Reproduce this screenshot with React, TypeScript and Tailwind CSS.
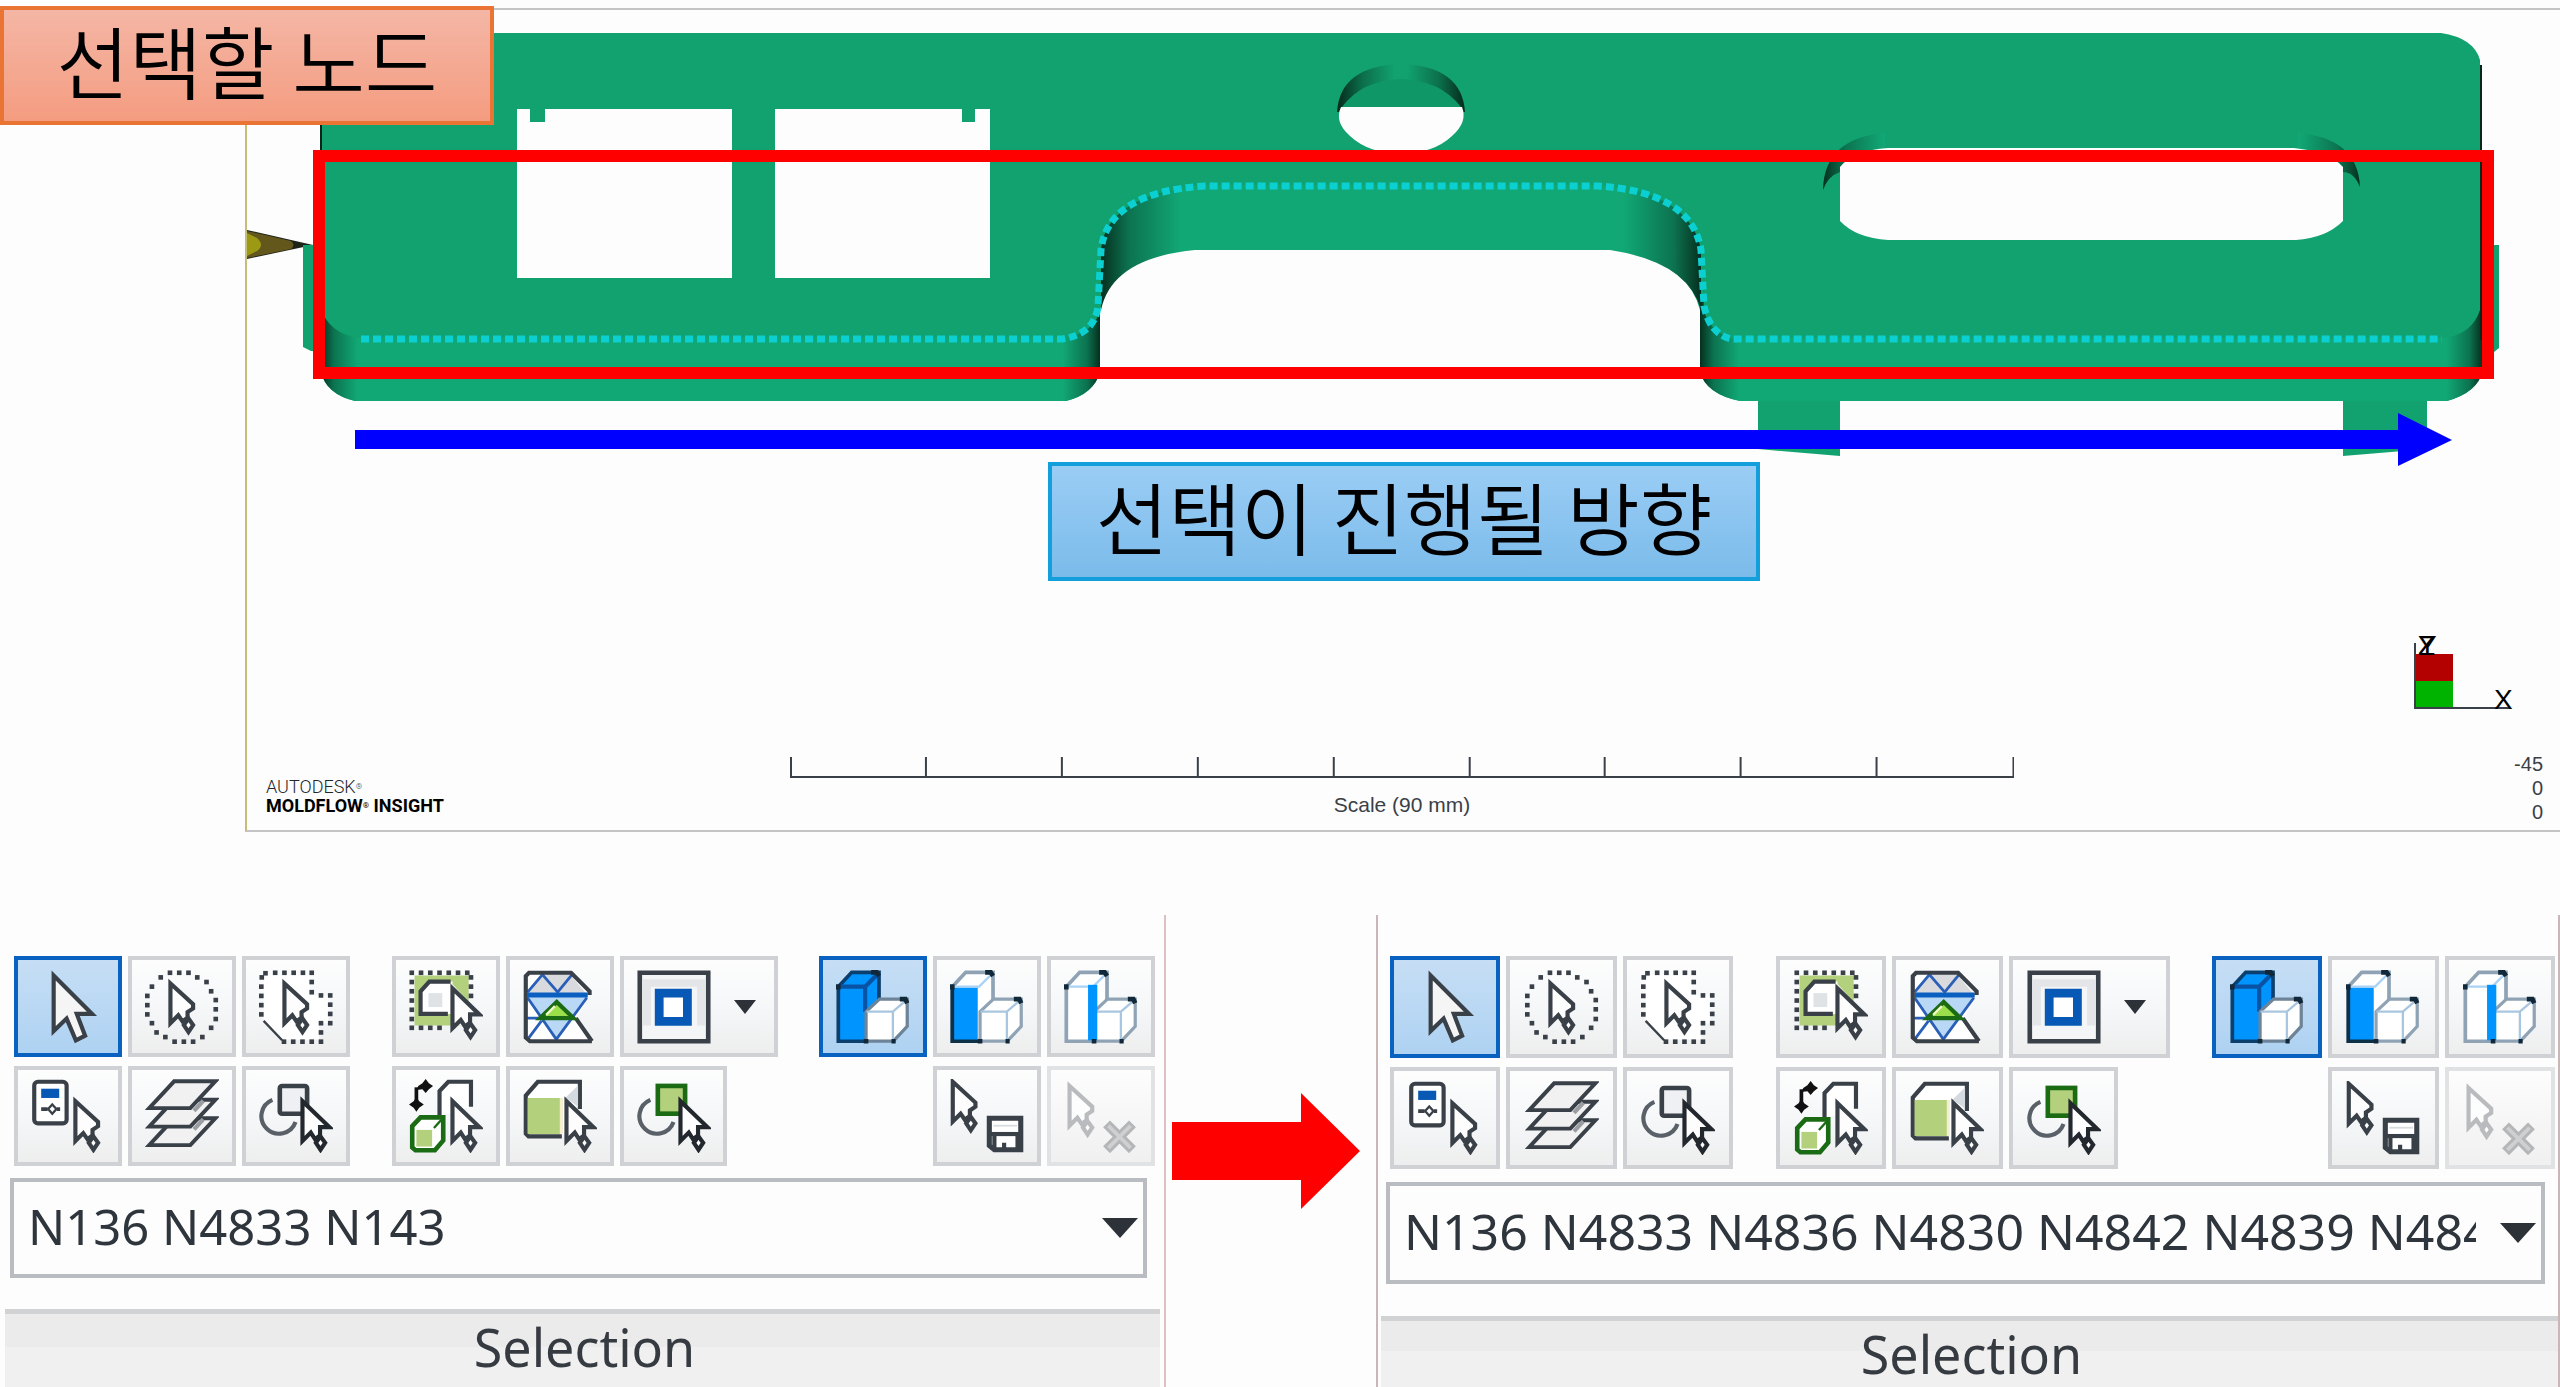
import React from "react";

const INK = "#3a4048";

/* ---------- Model view ---------- */

function ModelDrawing() {
  return (
    <svg viewBox="247 10 2313 591" className="block h-auto w-full" role="img" aria-label="Moulded part with selected nodes">
      <defs>
        <linearGradient id="darkLeft" x1="0" x2="1" y1="0" y2="0">
          <stop offset="0" stopColor="#06301f" />
          <stop offset="0.3" stopColor="#0c7350" />
          <stop offset="0.85" stopColor="#11a875" />
        </linearGradient>
        <linearGradient id="darkRight" x1="1" x2="0" y1="0" y2="0">
          <stop offset="0" stopColor="#06301f" />
          <stop offset="0.3" stopColor="#0c7350" />
          <stop offset="0.85" stopColor="#11a875" />
        </linearGradient>
        <linearGradient id="holeShade" x1="0" x2="1" y1="0" y2="0">
          <stop offset="0" stopColor="#052a1c" />
          <stop offset="0.2" stopColor="#0c6f4c" />
          <stop offset="0.45" stopColor="#11a270" />
          <stop offset="0.55" stopColor="#11a270" />
          <stop offset="0.8" stopColor="#0c6f4c" />
          <stop offset="1" stopColor="#052a1c" />
        </linearGradient>
      </defs>

      {/* injection cone */}
      <path d="M247 230 L313 245 L247 259Z" fill="#1d2418" />
      <path d="M247 231 L291 241 Q296 245 291 249 L247 258Z" fill="#63571c" />
      <path d="M247 233 L257 238 Q265 245 257 251 L247 256Z" fill="#9c9a14" />

      {/* side tabs and feet */}
      <path d="M303 245 H325 V352 L311 351 L303 347Z" fill="#11a270" />
      <path d="M2480 245 H2499 V348 L2494 352 H2480Z" fill="#11a270" />
      <path d="M1758 395 H1840 V456 L1758 449Z M2343 395 H2427 V449 L2343 456Z" fill="#11a270" />

      {/* lower skirt */}
      <path
        d="M321 300 V372 Q326 394 355 401 H1066 Q1094 394 1100 372 V310 Q1112 258 1190 250 H1615 Q1688 262 1700 310 V372 Q1706 394 1740 401 H2447 Q2478 392 2482 372 V300 H2440 V170 H1000 V300Z"
        fill="#11a875"
      />
      <path d="M321 312 V372 Q326 394 355 401 H364 V320Z" fill="url(#darkLeft)" />
      <path d="M1100 300 V372 Q1094 394 1066 401 H1056 V320Z" fill="url(#darkRight)" />
      <path d="M1700 300 V372 Q1706 394 1740 401 H1746 V320Z" fill="url(#darkLeft)" />
      <path d="M2482 300 V372 Q2478 392 2447 401 H2440 V320Z" fill="url(#darkRight)" />
      <path d="M1101 310 V240 Q1120 190 1195 186 V250 Q1112 258 1101 310Z" fill="url(#darkLeft)" />
      <path d="M1701 310 V240 Q1690 190 1610 186 V250 Q1688 262 1701 310Z" fill="url(#darkRight)" />

      {/* top face */}
      <path
        d="M320 33 H2441 Q2474 38 2480 60 V310 Q2472 334 2445 338 H1731 Q1708 330 1704 310 L1701 250 Q1690 192 1598 185 H1205 Q1106 194 1101 250 V306 Q1096 334 1062 338 H358 Q334 334 324 316 L320 300Z"
        fill="#11a270"
      />
      <path d="M321 120 V160 M2481 65 V340" stroke="#08251b" strokeWidth="2" fill="none" />

      {/* square windows */}
      <path d="M517 109 H530 V122 H545 V109 H732 V278 H517Z M775 109 H962 V122 H975 V109 H990 V278 H775Z" fill="#fdfdfd" />

      {/* round hole */}
      <path d="M1337 112 Q1340 66 1401 64 Q1462 66 1465 112Z" fill="url(#holeShade)" />
      <path d="M1342 107 Q1362 80 1401 79 Q1440 80 1461 107Z" fill="#0f9768" />
      <path d="M1341 107 H1462 Q1468 122 1452 136 Q1434 153 1401 154 Q1368 153 1350 136 Q1334 122 1341 107Z" fill="#fdfdfd" />

      {/* slot */}
      <path d="M1823 190 Q1824 138 1885 133 H1895 V148 Q1840 152 1840 172 Q1828 176 1823 190Z" fill="url(#darkLeft)" />
      <path d="M2360 187 Q2358 138 2298 133 H2288 V148 Q2343 152 2343 172 Q2354 172 2360 187Z" fill="url(#darkRight)" />
      <path d="M1885 133 H2298 V150 H1885Z" fill="#11a270" />
      <path d="M1888 148 H2294 Q2330 152 2343 167 V221 Q2326 238 2296 240 H1888 Q1856 238 1840 221 V167 Q1854 150 1888 148Z" fill="#fdfdfd" />

      {/* selected nodes */}
      <path
        d="M361 339 H1062 Q1095 334 1098 306 L1101 250 Q1108 192 1205 186 H1598 Q1692 192 1701 250 L1704 306 Q1710 334 1731 339 H2442"
        fill="none"
        stroke="#0ccfd2"
        strokeWidth="7"
        strokeDasharray="8 4"
      />

      {/* selection frame */}
      <path d="M313 150 H2494 V379 H313Z M325 162 V367 H2482 V162Z" fillRule="evenodd" fill="#ff0000" />

      {/* direction arrow */}
      <path d="M355 430 H2398 V413 L2452 440 L2398 466 V449 H355Z" fill="#0000ff" />
    </svg>
  );
}

function ScaleRuler() {
  return (
    <svg viewBox="0 0 1225 22" preserveAspectRatio="none" className="block h-[22px] w-full" aria-hidden="true">
      <path
        d="M1 0 V20 H1224 V0 M136 0 V20 M272 0 V20 M408 0 V20 M544 0 V20 M680 0 V20 M815 0 V20 M951 0 V20 M1087 0 V20"
        fill="none"
        stroke={INK}
        strokeWidth="2"
      />
    </svg>
  );
}

function AxisTriad() {
  return (
    <svg width="120" height="90" viewBox="0 0 120 90" className="block font-['Liberation_Sans']" role="img" aria-label="Axes">
      <path d="M4 28 H41 V55 H4Z" fill="#b30000" />
      <path d="M4 55 H41 V82 H4Z" fill="#00b300" />
      <path d="M3 17 V82 H98" fill="none" stroke={INK} strokeWidth="2" />
      <text x="6" y="29" fontSize="28" fill="#000">Z</text>
      <text x="6" y="29" fontSize="28" fill="#000">Y</text>
      <text x="82" y="83" fontSize="28" fill="#000">X</text>
    </svg>
  );
}

function Viewport() {
  return (
    <section className="relative pt-2">
      <div className="ml-[245px] border-y-2 border-l-2 border-y-[#c4c4c4] border-l-[#c5bd78]">
        <ModelDrawing />
        <div className="flex h-[120px] justify-end pt-[25px] pr-[28px]">
          <AxisTriad />
        </div>
        <div className="grid h-[109px] grid-cols-[543fr_1225fr_546fr]">
          <div className="pt-[56px] pl-[19px] font-[Roboto] text-[18px] leading-[19px] text-[#22272c]">
            <div className="font-light">AUTODESK<sup className="text-[8px]">®</sup></div>
            <div className="font-bold text-black">MOLDFLOW<sup className="text-[8px] font-normal">®</sup> INSIGHT</div>
          </div>
          <div className="pt-[36px]">
            <ScaleRuler />
            <p className="pt-[14px] text-center font-['Liberation_Sans'] text-[21px] leading-[24px] text-[#3a4048]">Scale (90 mm)</p>
          </div>
          <div className="pt-[31px] pr-[17px] text-right font-['Liberation_Sans'] text-[20px] leading-[24px] text-[#3a4048]">
            <div>-45</div>
            <div>0</div>
            <div>0</div>
          </div>
        </div>
      </div>

      <p className="absolute top-1.5 left-0 flex h-[119px] w-[494px] items-center justify-center border-4 border-[#ea7434] bg-linear-to-b from-[#f4b6a5] to-[#f49c80] pb-[12px] font-['Noto_Sans_CJK_KR',sans-serif] text-[79px] leading-none font-[350] text-black">
        선택할 노드
      </p>
      <p className="absolute top-[462px] left-[40.94%] flex h-[119px] w-[712px] items-center justify-center border-4 border-[#129fdb] bg-linear-to-b from-[#9acdf5] to-[#7bbbea] pb-[12px] font-['Noto_Sans_CJK_KR',sans-serif] text-[79px] leading-none font-[350] text-black">
        선택이 진행될 방향
      </p>
    </section>
  );
}

/* ---------- Toolbar icons, 16 x 16 units ---------- */

function Pointer({ x, y, small, color = INK }: { x: number; y: number; small?: boolean; color?: string }) {
  return (
    <g transform={`translate(${x} ${y})`} fill="#fdfdfd" stroke={color} strokeWidth="0.9">
      <path d={small ? "M0 0.4 V9 L1.7 7.3 L2.6 8.6 L3.7 7.8 V6.6 L4.9 5.8 V4.9Z" : "M0 0.4 V9 L1.8 7.2 L2.7 8.6 L3.8 7.8 V6 H5.8Z"} />
      <path d="M3.9 8 L4.9 9.4 L3.9 10.9 L2.9 9.4Z" />
    </g>
  );
}

function Dots({ points }: { points: number[][] }) {
  return (
    <g fill={INK}>
      {points.map(([x, y]) => (
        <rect key={`${x}-${y}`} x={x - 0.5} y={y - 0.5} width="1" height="1" />
      ))}
    </g>
  );
}

const CIRCLE = [
  [5.4, 0.6], [7.4, 0.6], [9.4, 0.6], [11.3, 1.6], [13.3, 2.6], [14.3, 4.6], [15.3, 6.5], [15.3, 8.5], [15.3, 10.6],
  [14.3, 12.5], [12.4, 14.5], [10.4, 15.5], [8.4, 15.5], [6.4, 15.5], [4.4, 14.5], [2.5, 13.5], [1.5, 11.5],
  [0.5, 9.6], [0.5, 7.6], [0.5, 5.6], [1.5, 3.6], [3.4, 1.6],
];
const POLYGON = [
  [1.4, 0.7], [3.5, 0.6], [5.5, 0.6], [7.5, 0.6], [9.5, 0.6], [11.4, 0.6], [11.4, 2.6], [11.4, 4.8], [13.4, 5.5],
  [15.4, 5.5], [15.4, 7.5], [15.4, 9.5], [15.4, 11.5], [13.4, 11.5], [13.4, 13.5], [13.4, 15.5], [11.4, 15.5],
  [9.4, 15.5], [7.4, 15.5], [5.4, 15.5], [0.6, 1.6], [0.5, 3.6], [0.5, 5.6], [0.5, 7.6], [0.5, 9.6],
];
const SQUARE = [
  [0.6, 0.6], [2.6, 0.6], [4.6, 0.6], [6.6, 0.6], [8.6, 0.6], [10.6, 0.6], [12.6, 0.6], [13.4, 1.6], [13.4, 3.6],
  [13.4, 5.6], [0.6, 2.6], [0.6, 4.6], [0.6, 6.6], [0.6, 8.6], [0.6, 10.6], [0.6, 12.5], [2.6, 12.5], [4.6, 12.5], [6.6, 12.5],
];

function Icon({ children }: { children: React.ReactNode }) {
  return (
    <svg viewBox="0 0 16 16" className="size-[74px] shrink-0" aria-hidden="true">
      {children}
    </svg>
  );
}

const SelectIcon = () => (
  <Icon>
    <path d="M4.9 1.2 V13.2 L7.7 10.5 L9.7 15.2 L11.7 14.2 L9.9 9.5 H13.2Z" fill="#f5f5f6" stroke={INK} strokeWidth="0.9" />
  </Icon>
);
const CircleSelectIcon = () => (
  <Icon>
    <Dots points={CIRCLE} />
    <Pointer x={5.5} y={2.5} small />
  </Icon>
);
const PolygonSelectIcon = () => (
  <Icon>
    <path d="M1 1 H11 V5.5 H15 V11.5 H13 V15 H5 L1 11Z" fill="#fff" />
    <path d="M1 11 L5 15.2" stroke={INK} strokeWidth="0.5" />
    <Dots points={POLYGON} />
    <Pointer x={5.5} y={2.5} small />
  </Icon>
);
const EnclosedIcon = () => (
  <Icon>
    <path d="M1.2 1.2 H12.9 V12 H1.2Z" fill="#b3d07c" />
    <path d="M9.4 12 V3 L13 7 V12Z" fill="#f7f8f9" />
    <Dots points={SQUARE} />
    <path d="M2.5 9.5 V4.6 L4.4 2.5 H9.4 V9.5Z" fill="#fff" />
    <path d="M8.4 9.5 H2.5 V4.6 L4.4 2.5 H9" fill="none" stroke={INK} strokeWidth="0.9" />
    <path d="M4.2 5 H7.2 V8 H4.2Z" fill="#dfe3e6" />
    <Pointer x={9.4} y={3.6} />
  </Icon>
);
const FacingIcon = () => (
  <Icon>
    <path d="M1 0.6 H10.4 L14.4 4.9 L11.6 10.6 L15 15.4 H1.4 L0.6 14.8 V1Z" fill="#fff" />
    <path d="M4.2 0.8 H10 L13.6 5 H1 Z" fill="#d8dadd" />
    <path d="M1 5.8 H14 L7.2 15.2Z" fill="#b9d8f5" />
    <path d="M1 4.8 L4.2 1 L7.5 4.8 L10.6 1 M1 6 L7.2 15 L13.8 6 M0.8 10.4 H4 M1 15 L4 11" fill="none" stroke="#2a5fb8" strokeWidth="0.6" />
    <path d="M1 5.4 H14" stroke="#0a5fc0" strokeWidth="1.1" />
    <path d="M14.9 15.4 H1.5 L0.6 14.6 V1.3 L1.3 0.6 H10.4 L14.4 4.6 V5.4 M11.4 10.4 L14.9 15.4" fill="none" stroke={INK} strokeWidth="0.9" />
    <path d="M7.3 6.9 L10.9 10.4 H3.7Z" fill="#9be04a" stroke="#1a6b14" strokeWidth="0.9" />
    <path d="M6.9 7.8 L5 9.7" stroke="#f2f7c8" strokeWidth="0.5" />
  </Icon>
);
const WindowIcon = () => (
  <Icon>
    <path d="M0.6 0.6 H15.4 V15.4 H0.6Z" fill="#f4f5f6" stroke={INK} />
    <path d="M1.2 2 H14.8 V3.6 H1.2Z M1.2 3.6 H3 V12 H1.2Z M13 3.6 H14.8 V12 H13Z" fill="#e3e5e8" />
    <path d="M4.8 5 H10.9 V11.1 H4.8Z" fill="#fff" stroke="#0759b5" strokeWidth="1.9" />
  </Icon>
);
const PropertyIcon = () => (
  <Icon>
    <rect x="0.7" y="0.6" width="7" height="9" rx="0.8" fill="#fff" stroke={INK} strokeWidth="0.9" />
    <path d="M2.2 2.1 H6.1 V4.1 H2.2Z" fill="#0759b5" />
    <path d="M2.2 6.5 H3.6 M5.6 6.5 H6.3" stroke={INK} strokeWidth="0.8" />
    <path d="M4.6 5.5 L5.5 6.5 L4.6 7.5 L3.7 6.5Z" fill="#fff" stroke={INK} strokeWidth="0.5" />
    <Pointer x={9.6} y={4.4} small />
  </Icon>
);
const LayersIcon = () => (
  <Icon>
    {[8.1, 4.1, 0.1].map((y) => (
      <path key={y} transform={`translate(0 ${y})`} d="M6.3 0.4 H15.2 L9.8 6.2 H0.9Z" fill="#f1f1f2" stroke={INK} strokeWidth="0.85" />
    ))}
    <path d="M10.6 6.9 L12.6 4.7 M10.6 10.9 L12.6 8.7" stroke="#9a9ea3" strokeWidth="0.9" />
  </Icon>
);
function ShapesIcon({ green }: { green?: boolean }) {
  return (
    <Icon>
      <path d="M2.9 4.5 A3.8 3.8 0 1 0 7.9 9.3" fill="none" stroke="#5a6068" strokeWidth="0.9" />
      <rect x="4.5" y="1.5" width="5.9" height="6" rx={green ? 0 : 0.5} fill={green ? "#b3d07c" : "#eef0f3"} stroke={green ? "#1a6b14" : INK} />
      <Pointer x={9.4} y={4.4} color="#23282e" />
    </Icon>
  );
}
const MoveCubeIcon = () => (
  <Icon>
    <path d="M6.6 8 V2.6 L8.5 0.6 H13.4 V6" fill="#fff" stroke={INK} strokeWidth="0.9" />
    <path d="M1.6 1.8 V5" stroke="#111" strokeWidth="0.8" />
    <path d="M3.6 0 L4.3 0.9 L5.2 1.5 L4.3 2.2 L3.6 3 L2.9 2.2 L1.6 2.4 L2 1.5 L2.9 0.9Z M1.6 3.9 L2.2 4.8 L3.2 5.5 L2.2 6.2 L1.6 7.1 L1 6.2 L0 5.5 L1 4.8Z" fill="#111" />
    <path d="M0.7 10.2 L2.5 8.3 H7.4 V13.3 L5.6 15.4 H1.4 L0.7 14.8Z" fill="#fff" stroke="#1a6b14" />
    <path d="M1.6 11 H5 V14.6 H1.6Z" fill="#b3d07c" />
    <path d="M5.4 10.6 L7 8.8" stroke="#1a6b14" strokeWidth="0.5" />
    <Pointer x={9.4} y={4.4} />
  </Icon>
);
const CubeFaceIcon = () => (
  <Icon>
    <path d="M0.6 3.6 L3.2 0.6 H12.3 V8 L8.4 12.4 H1.2 L0.6 11.8Z" fill="#fff" />
    <path d="M8.4 12.4 H1.2 L0.6 11.8 V3.6 L3.2 0.6 H12.3 V6.5" fill="none" stroke={INK} strokeWidth="0.9" />
    <path d="M11.9 1.4 V6 L9.2 4Z" fill="#d5dae0" />
    <path d="M1 4.1 H8.4 V11.9 H1Z" fill="#b3d07c" />
    <path d="M8.3 4.1 V11.9" stroke="#f4f0cf" strokeWidth="0.7" />
    <Pointer x={9.4} y={4.4} />
  </Icon>
);
function SolidIcon({ kind }: { kind: "body" | "face" | "edge" }) {
  const body = kind === "body";
  const line = body ? "#0b3f6e" : "#8fa3b5";
  return (
    <Icon>
      <path d="M0.5 3.6 L3.4 0.5 H9.3 V6.3 L6.4 15.4 H0.5Z" fill={body ? "#0094ff" : "#fff"} stroke={line} strokeWidth="0.8" />
      {body && <path d="M0.7 3.6 H6.3 L9 0.9 M6.3 3.6 V9" fill="none" stroke="#0853a3" strokeWidth="0.9" />}
      {kind === "face" && <path d="M0.7 3.8 H6 V15.2 H0.7Z" fill="#0094ff" />}
      {kind === "face" && <path d="M0.5 3.4 V15.4 H6.6" fill="none" stroke="#0d3047" strokeWidth="0.8" />}
      {!body && <path d="M0.7 3.6 H6.3 L9 0.9" fill="none" stroke="#a9d2f5" strokeWidth="0.5" />}
      <path d="M6.5 9 L9.4 6.3 H15.4 V12.2 L12.4 15.4 H6.5Z" fill="#fff" stroke={body ? "#6d8397" : "#8fa3b5"} strokeWidth="0.7" />
      <path d="M6.6 9 H12.3 L15.2 6.5 M12.3 9 V15.2" fill="none" stroke="#a9c6e0" strokeWidth="0.5" />
      {kind === "edge" && <path d="M5.2 3.2 H7.2 V15.2 H5.2Z" fill="#0094ff" />}
      <path d="M7.6 0.5 H8.8 L9.3 1.3 M13.8 6.3 H15 L15.4 7.2 M6 15.4 H7 M12 15.4 H12.9 M0.5 3.1 V4.2" fill="none" stroke="#10283a" />
    </Icon>
  );
}
const SaveSelectionIcon = () => (
  <Icon>
    <Pointer x={0.6} y={0.2} small />
    <path d="M8.5 8.5 H15.3 V15.3 H9.6 L8.5 14.4Z" fill="#fff" stroke={INK} strokeWidth="1.1" />
    <path d="M8.6 11.9 H15.2" stroke={INK} strokeWidth="0.9" />
    <path d="M9.6 12 V15.2 M11.7 13.8 V15.2 M14.6 12 V15" stroke={INK} strokeWidth="0.9" />
    <path d="M9.4 10.1 H14.5" stroke="#d9dcdf" strokeWidth="0.4" />
  </Icon>
);
const DeleteSelectionIcon = () => (
  <Icon>
    <Pointer x={1.2} y={1.1} small color="#b9bbbe" />
    <path d="M9.2 9.7 L14.8 15.3 M14.8 9.7 L9.2 15.3" stroke="#b4b6b8" strokeWidth="2.1" />
    <path d="M9.6 10.1 L14.4 14.9 M14.4 10.1 L9.6 14.9" stroke="#cfd0d2" strokeWidth="0.8" />
  </Icon>
);

/* ---------- Selection panel ---------- */

function ToolButton({ label, active, className = "", disabled, children }: {
  label: string;
  active?: boolean;
  disabled?: boolean;
  className?: string;
  children: React.ReactNode;
}) {
  const look = active
    ? "border-[#0a62c0] bg-linear-to-b from-[#c6def5] to-[#aed2f2]"
    : disabled
      ? "border-[#e0e2e4] bg-linear-to-b from-[#fdfdfd] to-[#f0f0f0]"
      : "border-[#cfd1d4] bg-linear-to-b from-[#fdfdfd] via-[#f5f7f9] to-[#eeeeee]";
  return (
    <button type="button" aria-label={label} aria-pressed={active} disabled={disabled} className={`flex min-w-0 items-center justify-center border-4 ${look} ${className}`}>
      {children}
    </button>
  );
}

function Caret({ className }: { className: string }) {
  return (
    <svg viewBox="0 0 20 10" preserveAspectRatio="none" className={className} aria-hidden="true">
      <path d="M0 0 H20 L10 10Z" fill="#2c3238" />
    </svg>
  );
}

function SelectionPanel({ value, panel, tools, field, clip }: {
  value: string;
  panel: string;
  tools: string;
  field: string;
  clip: string;
}) {
  return (
    <section className={`flex min-w-0 flex-col ${panel}`}>
      <div className={`grid grid-cols-[repeat(3,108fr)_30fr_repeat(2,108fr)_158fr_29fr_repeat(3,108fr)] gap-x-1.5 gap-y-[9px] ${tools}`}>
        <ToolButton label="Select" active><SelectIcon /></ToolButton>
        <ToolButton label="Circle select"><CircleSelectIcon /></ToolButton>
        <ToolButton label="Polygon select"><PolygonSelectIcon /></ToolButton>
        <span />
        <ToolButton label="Enclosed items only"><EnclosedIcon /></ToolButton>
        <ToolButton label="Facing items only"><FacingIcon /></ToolButton>
        <ToolButton label="Select window" className="gap-[23px] pr-[6px]">
          <WindowIcon />
          <Caret className="h-[14px] w-[22px]" />
        </ToolButton>
        <span />
        <ToolButton label="Select body" active><SolidIcon kind="body" /></ToolButton>
        <ToolButton label="Select face"><SolidIcon kind="face" /></ToolButton>
        <ToolButton label="Select edge"><SolidIcon kind="edge" /></ToolButton>

        <ToolButton label="Select by properties"><PropertyIcon /></ToolButton>
        <ToolButton label="Select layer"><LayersIcon /></ToolButton>
        <ToolButton label="Invert selection"><ShapesIcon /></ToolButton>
        <span />
        <ToolButton label="Expand selection"><MoveCubeIcon /></ToolButton>
        <ToolButton label="Select by face"><CubeFaceIcon /></ToolButton>
        <ToolButton label="Select overlapping" className="w-[68%]"><ShapesIcon green /></ToolButton>
        <span />
        <span />
        <ToolButton label="Save selection"><SaveSelectionIcon /></ToolButton>
        <ToolButton label="Delete selection" disabled><DeleteSelectionIcon /></ToolButton>
      </div>

      <div className={`flex items-center border-4 border-[#b9bdc2] bg-[#fdfdfd] ${field}`}>
        <input
          aria-label="Selected nodes"
          defaultValue={value}
          className={`h-full min-w-0 flex-1 bg-transparent pb-[4px] font-['Noto_Sans'] text-[#2f353c] outline-none ${clip}`}
        />
        <button type="button" aria-label="Open selection list" className="pr-[5px]">
          <Caret className="h-[20px] w-[36px]" />
        </button>
      </div>

      <h2 className="flex flex-1 justify-center border-t-[5px] border-[#d0d2d4] bg-linear-to-b from-[#ebebeb] from-45% to-[#f0f0f0] to-45% pt-[3px] pl-1 font-['Noto_Sans'] text-[52px] leading-[60px] font-normal text-[#363b42]">
        Selection
      </h2>
    </section>
  );
}

export default function App() {
  return (
    <main className="flex min-h-screen flex-col overflow-hidden bg-[#fdfdfd]">
      <Viewport />
      <div className="mt-[83px] grid flex-1 grid-cols-[1166fr_210fr_1184fr]">
        <SelectionPanel
          value="N136 N4833 N143"
          panel="border-r-2 border-[#e0bfc3] pl-[5px] pr-1"
          tools="mt-[41px] mr-[5px] ml-[9px] grid-rows-[101px_100px]"
          field="mt-[12px] mr-[13px] mb-[31px] ml-[5px] h-[100px]"
          clip="pl-[14px] mr-[24px] text-[49px]"
        />
        <div className="flex items-start px-1.5 pt-[178px]">
          <svg viewBox="0 0 188 116" className="h-[116px] w-[188px]" role="img" aria-label="Result">
            <path d="M0 29 H129 V0 L188 58 L129 116 V87 H0Z" fill="#ff0000" />
          </svg>
        </div>
        <SelectionPanel
          value="N136 N4833 N4836 N4830 N4842 N4839 N4845"
          panel="border-x-2 border-[#c9b6b8] pl-[3px]"
          tools="mt-[41px] mr-[3px] ml-[9px] grid-rows-[102px_102px]"
          field="mt-[13px] mr-[13px] mb-[32px] ml-[5px] h-[102px]"
          clip="ml-[14px] mr-[24px] text-[50px]"
        />
      </div>
    </main>
  );
}
